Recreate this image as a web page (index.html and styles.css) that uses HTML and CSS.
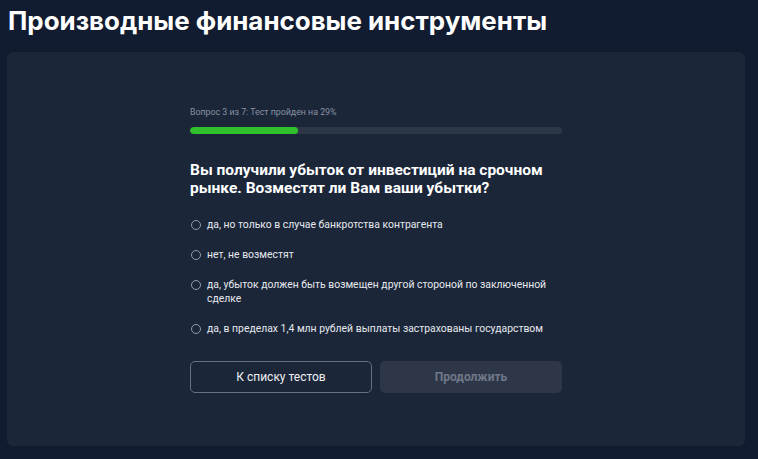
FILE: index.html
```html
<!DOCTYPE html>
<html lang="ru">
<head>
<meta charset="utf-8">
<link rel="stylesheet" href="styles.css">
</head>
<body>
<h1 class="title">Производные финансовые инструменты</h1>
<div class="card">
  <div class="quiz">
    <div class="progress-label">Вопрос 3 из 7: Тест пройден на 29%</div>
    <div class="track"><div class="fill" style="width:29%"></div></div>
    <h2 class="question">Вы получили убыток от инвестиций на срочном рынке. Возместят ли Вам ваши убытки?</h2>
    <ul class="options">
      <li class="option"><span class="radio"></span><span class="opt-text">да, но только в случае банкротства контрагента</span></li>
      <li class="option"><span class="radio"></span><span class="opt-text">нет, не возместят</span></li>
      <li class="option"><span class="radio"></span><span class="opt-text">да, убыток должен быть возмещен другой стороной по заключенной сделке</span></li>
      <li class="option"><span class="radio"></span><span class="opt-text">да, в пределах 1,4 млн рублей выплаты застрахованы государством</span></li>
    </ul>
    <div class="buttons">
      <button class="btn btn-outline">К списку тестов</button>
      <button class="btn btn-disabled">Продолжить</button>
    </div>
  </div>
</div>
</body>
</html>
```
FILE: styles.css
```css
* { box-sizing: border-box; }
html, body { margin: 0; padding: 0; }
body {
  background: #111c31;
  color: #fff;
  font-family: Roboto, "Noto Sans", sans-serif;
  width: 758px;
  height: 459px;
  overflow: hidden;
  padding: 0 13px 0 7px;
}
.title {
  margin: 0;
  padding: 5px 0 0 1px;
  height: 52px;
  font-family: Inter, "Liberation Sans", sans-serif;
  font-weight: 700;
  font-size: 25.9px;
  line-height: 32px;
  color: #fff;
}
.card {
  background: #1b2639;
  border-radius: 6px;
  height: 394px;
  display: flex;
  justify-content: center;
  padding-top: 54px;
}
.quiz {
  width: 372px;
}
.progress-label {
  font-size: 8.8px;
  line-height: 12px;
  color: #8791a2;
  margin-bottom: 9px;
}
.track {
  height: 7px;
  background: #2e3748;
  border-radius: 4px;
  overflow: hidden;
}
.fill {
  height: 100%;
  background: #2fc02c;
  border-radius: 4px;
}
.question {
  margin: 27px 0 21px;
  font-family: Roboto, "Liberation Sans", sans-serif;
  font-weight: 700;
  font-size: 15.5px;
  line-height: 18px;
  color: #fff;
}
.options {
  list-style: none;
  margin: 0;
  padding: 0;
  display: flex;
  flex-direction: column;
  gap: 16px;
}
.option {
  display: flex;
  align-items: flex-start;
  gap: 6px;
  font-size: 10.4px;
  line-height: 14px;
  color: #e6e9ee;
}
.radio {
  flex: none;
  width: 10px;
  height: 10px;
  margin-top: 2px;
  margin-left: 1px;
  border: 1px solid #939cab;
  border-radius: 50%;
}
.buttons {
  display: grid;
  grid-template-columns: 1fr 1fr;
  gap: 8px;
  margin-top: 25px;
}
.btn {
  height: 32px;
  border-radius: 5px;
  font-family: Roboto, "Noto Sans", sans-serif;
  font-size: 12px;
}
.btn-outline {
  background: transparent;
  border: 1px solid #667085;
  color: #eef0f4;
}
.btn-disabled {
  background: #2e3748;
  border: none;
  color: #6e7787;
  font-weight: 700;
}
```
